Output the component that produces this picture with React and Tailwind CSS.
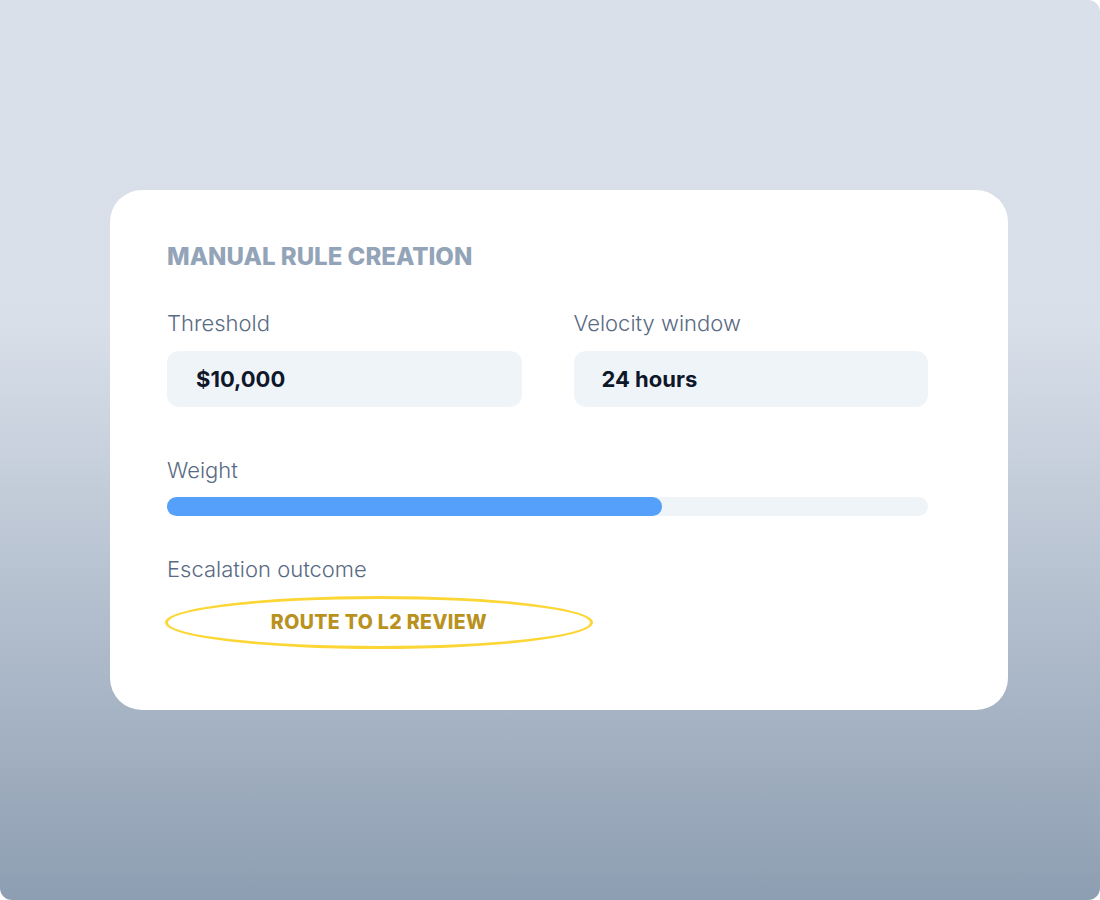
export default function App() {
  // weight slider fill, percent of the track
  const weight = 65;

  return (
    <div className="w-[1100px] h-[900px] overflow-hidden rounded-xl rounded-tl-none bg-[linear-gradient(180deg,#d9e0ea_0%,#d8dfe9_36%,#8e9eb2_100%)] pt-[190px] pl-[110px] font-['Inter',sans-serif]">
      <div className="w-[898px] h-[520px] rounded-[32px] bg-white px-[57px] pt-[51px]">
        <h2 className="text-[24px] leading-[32px] font-extrabold text-[#93a4b8]">
          MANUAL RULE CREATION
        </h2>

        {/* threshold + velocity inputs */}
        <div className="mt-[36px] grid grid-cols-2 gap-[52px] w-[761px]">
          <div>
            <div className="text-[22px] leading-[28px] font-light text-[#596a83]">Threshold</div>
            <div className="mt-[14px] h-[56px] rounded-xl bg-[#eff4f9] flex items-center px-[29px] text-[22px] font-bold text-[#0f172a]">
              $10,000
            </div>
          </div>
          <div>
            <div className="text-[22px] leading-[28px] font-light text-[#596a83]">Velocity window</div>
            <div className="mt-[14px] h-[56px] rounded-xl bg-[#eff4f9] flex items-center px-[28px] text-[22px] font-bold text-[#0f172a]">
              24 hours
            </div>
          </div>
        </div>

        <div className="mt-[49px] text-[22px] leading-[28px] font-light text-[#596a83]">Weight</div>
        <div className="mt-[13px] w-[761px] h-[19px] rounded-full bg-[#eff4f9]">
          <div className="h-full rounded-full bg-[#55a0fb]" style={{ width: `${weight}%` }} />
        </div>

        <div className="mt-[39px] text-[22px] leading-[28px] font-light text-[#596a83]">Escalation outcome</div>
        <div className="mt-[13px] ml-[-2px] w-[428px] h-[53px] rounded-[50%] border-[3px] border-[#fbd634] flex items-center justify-center">
          <span className="text-[19.5px] font-extrabold tracking-[0.4px] text-[#b8911e]">ROUTE TO L2 REVIEW</span>
        </div>
      </div>
    </div>
  );
}
